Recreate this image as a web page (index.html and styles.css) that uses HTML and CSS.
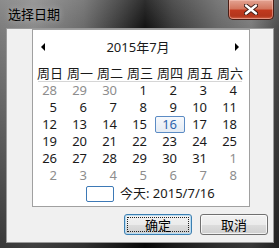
FILE: index.html
```html
<!DOCTYPE html>
<html lang="zh-CN">
<head>
    <meta charset="UTF-8">
    <title>选择日期</title>
    <link rel="stylesheet" href="styles.css">
</head>
<body>
    <div class="window">
        <div class="titlebar">
            <span class="title">选择日期</span>
            <button class="close" type="button">
                <svg width="14" height="11" viewBox="0 0 14 11">
                    <path d="M2 1.5 L12 9.5 M12 1.5 L2 9.5" stroke="#3a1a14" stroke-width="4.2" stroke-linecap="round"/>
                    <path d="M2 1.5 L12 9.5 M12 1.5 L2 9.5" stroke="#fff" stroke-width="2.4" stroke-linecap="round"/>
                </svg>
            </button>
        </div>

        <div class="client">
            <!-- month calendar -->
            <div class="calendar">
                <div class="cal-head">
                    <svg class="arrow" width="5" height="8" viewBox="0 0 5 8"><polygon points="4,0 4,8 0,4" fill="#000"/></svg>
                    <span class="month">2015年7月</span>
                    <svg class="arrow" width="5" height="8" viewBox="0 0 5 8"><polygon points="1,0 1,8 5,4" fill="#000"/></svg>
                </div>
                <div class="weekdays">
                    <span>周日</span><span>周一</span><span>周二</span><span>周三</span><span>周四</span><span>周五</span><span>周六</span>
                </div>
                <div class="rule"></div>
                <div class="days" id="days"></div>
                <div class="today-row">
                    <span class="today-box"></span>
                    <span>今天: 2015/7/16</span>
                </div>
            </div>

            <div class="buttons">
                <button class="btn default" type="button"><span class="focus">确定</span></button>
                <button class="btn" type="button">取消</button>
            </div>
        </div>
    </div>

    <script>
        // july 2015 starts on a wednesday, grid shows 6 weeks
        let days = document.getElementById("days");
        let cells = [];
        [28, 29, 30].forEach(d => cells.push({ d: d, other: true }));
        for (let d = 1; d <= 31; d++) cells.push({ d: d, other: false });
        for (let d = 1; cells.length < 42; d++) cells.push({ d: d, other: true });

        cells.forEach(c => {
            let span = document.createElement("span");
            span.textContent = c.d;
            if (c.other) span.classList.add("other");
            if (!c.other && c.d === 16) span.classList.add("today");
            days.appendChild(span);
        });
    </script>
</body>
</html>
```

FILE: styles.css
```css
* {
    margin: 0;
    padding: 0;
    box-sizing: border-box;
}

body {
    font-family: "Noto Sans", "Noto Sans CJK SC", sans-serif;
    font-size: 13px;
    color: #1a1a1a;
    background: #000;
}

.window {
    width: 279px;
    height: 248px;
    padding: 0 5px 5px 6px;
    display: flex;
    flex-direction: column;
    background:
        linear-gradient(to bottom, rgba(255, 255, 255, 0.12), rgba(0, 0, 0, 0) 30px, rgba(0, 0, 0, 0.55) 100%),
        linear-gradient(90deg, #7c7c7c 0%, #8a8a8a 12%, #6a6a6a 30%, #333 44%, #111 52%, #3a3a3a 62%, #666 78%, #7a7a7a 90%, #4a4a4a 100%);
}

.titlebar {
    height: 28px;
    display: flex;
    justify-content: space-between;
    align-items: flex-start;
}

.title {
    font-family: "Noto Sans CJK SC", sans-serif;
    font-size: 13px;
    line-height: 28px;
    margin-left: 2px;
    color: #000;
    text-shadow: 0 0 6px rgba(255, 255, 255, 0.45);
}

.close {
    width: 46px;
    height: 20px;
    border: 1px solid #4a1e16;
    border-top: none;
    border-radius: 0 0 5px 5px;
    background: linear-gradient(to bottom, #e3a392 0%, #d3775f 45%, #c0391e 55%, #b3361c 85%, #d2664a 100%);
    box-shadow: inset 0 0 0 1px rgba(255, 210, 200, 0.45);
    display: flex;
    align-items: center;
    justify-content: center;
    margin-right: 0;
}

.client {
    flex: 1;
    background: #f0f0f0;
    border: 1px solid #9a9a9a;
}

.calendar {
    width: 218px;
    height: 178px;
    margin-left: 25px;
    background: #fff;
    border: 1px solid #a0a0a0;
}

.cal-head {
    height: 34px;
    padding: 0 10px 0 8px;
    display: flex;
    justify-content: space-between;
    align-items: center;
}

.month {
    font-family: "Noto Sans", "Noto Sans CJK SC", sans-serif;
    line-height: 17px;
    margin-right: 4px;
}

.weekdays, .days {
    display: grid;
    grid-template-columns: repeat(7, 30px);
    margin-left: 2px;
}

.weekdays span {
    font-family: "Noto Sans CJK SC", sans-serif;
    height: 17px;
    line-height: 17px;
    text-align: center;
}

.rule {
    height: 1px;
    margin: 0 7px 0 5px;
    background: #d6d6d6;
}

.days {
    grid-auto-rows: 17px;
}

.days span {
    line-height: 17px;
    text-align: right;
    padding-right: 8px;
}

.days .other {
    color: #8d8d8d;
}

.days .today {
    color: #2f65ad;
    border: 1px solid #5b8bc4;
    border-radius: 2px;
    line-height: 15px;
    padding-right: 7px;
    background: linear-gradient(to bottom, #f7f9fc, #e4ebf4);
}

.today-row {
    height: 17px;
    margin-top: 1px;
    padding-left: 53px;
    display: flex;
    align-items: center;
    gap: 6px;
    font-family: "Noto Sans", "Noto Sans CJK SC", sans-serif;
    line-height: 17px;
}

.today-box {
    width: 28px;
    height: 16px;
    border: 1px solid #3d79b6;
    border-radius: 2px;
    background: #fff;
}

.buttons {
    display: flex;
    justify-content: flex-end;
    gap: 8px;
    margin-top: 7px;
    padding-right: 5px;
}

.btn {
    width: 68px;
    height: 21px;
    font-family: "Noto Sans CJK SC", sans-serif;
    font-size: 13px;
    color: #000;
    border: 1px solid #707070;
    border-radius: 3px;
    background: linear-gradient(to bottom, #f2f2f2 0%, #ebebeb 50%, #dddddd 51%, #cfcfcf 100%);
    box-shadow: inset 0 0 0 1px rgba(255, 255, 255, 0.7);
    display: flex;
    align-items: center;
    justify-content: center;
    padding: 2px;
}

.btn.default {
    border-color: #3c7fb1;
    box-shadow: inset 0 0 0 1px #b9dcf2;
}

.focus {
    flex: 1;
    align-self: stretch;
    display: flex;
    align-items: center;
    justify-content: center;
    border: 1px dotted #222;
}
```
